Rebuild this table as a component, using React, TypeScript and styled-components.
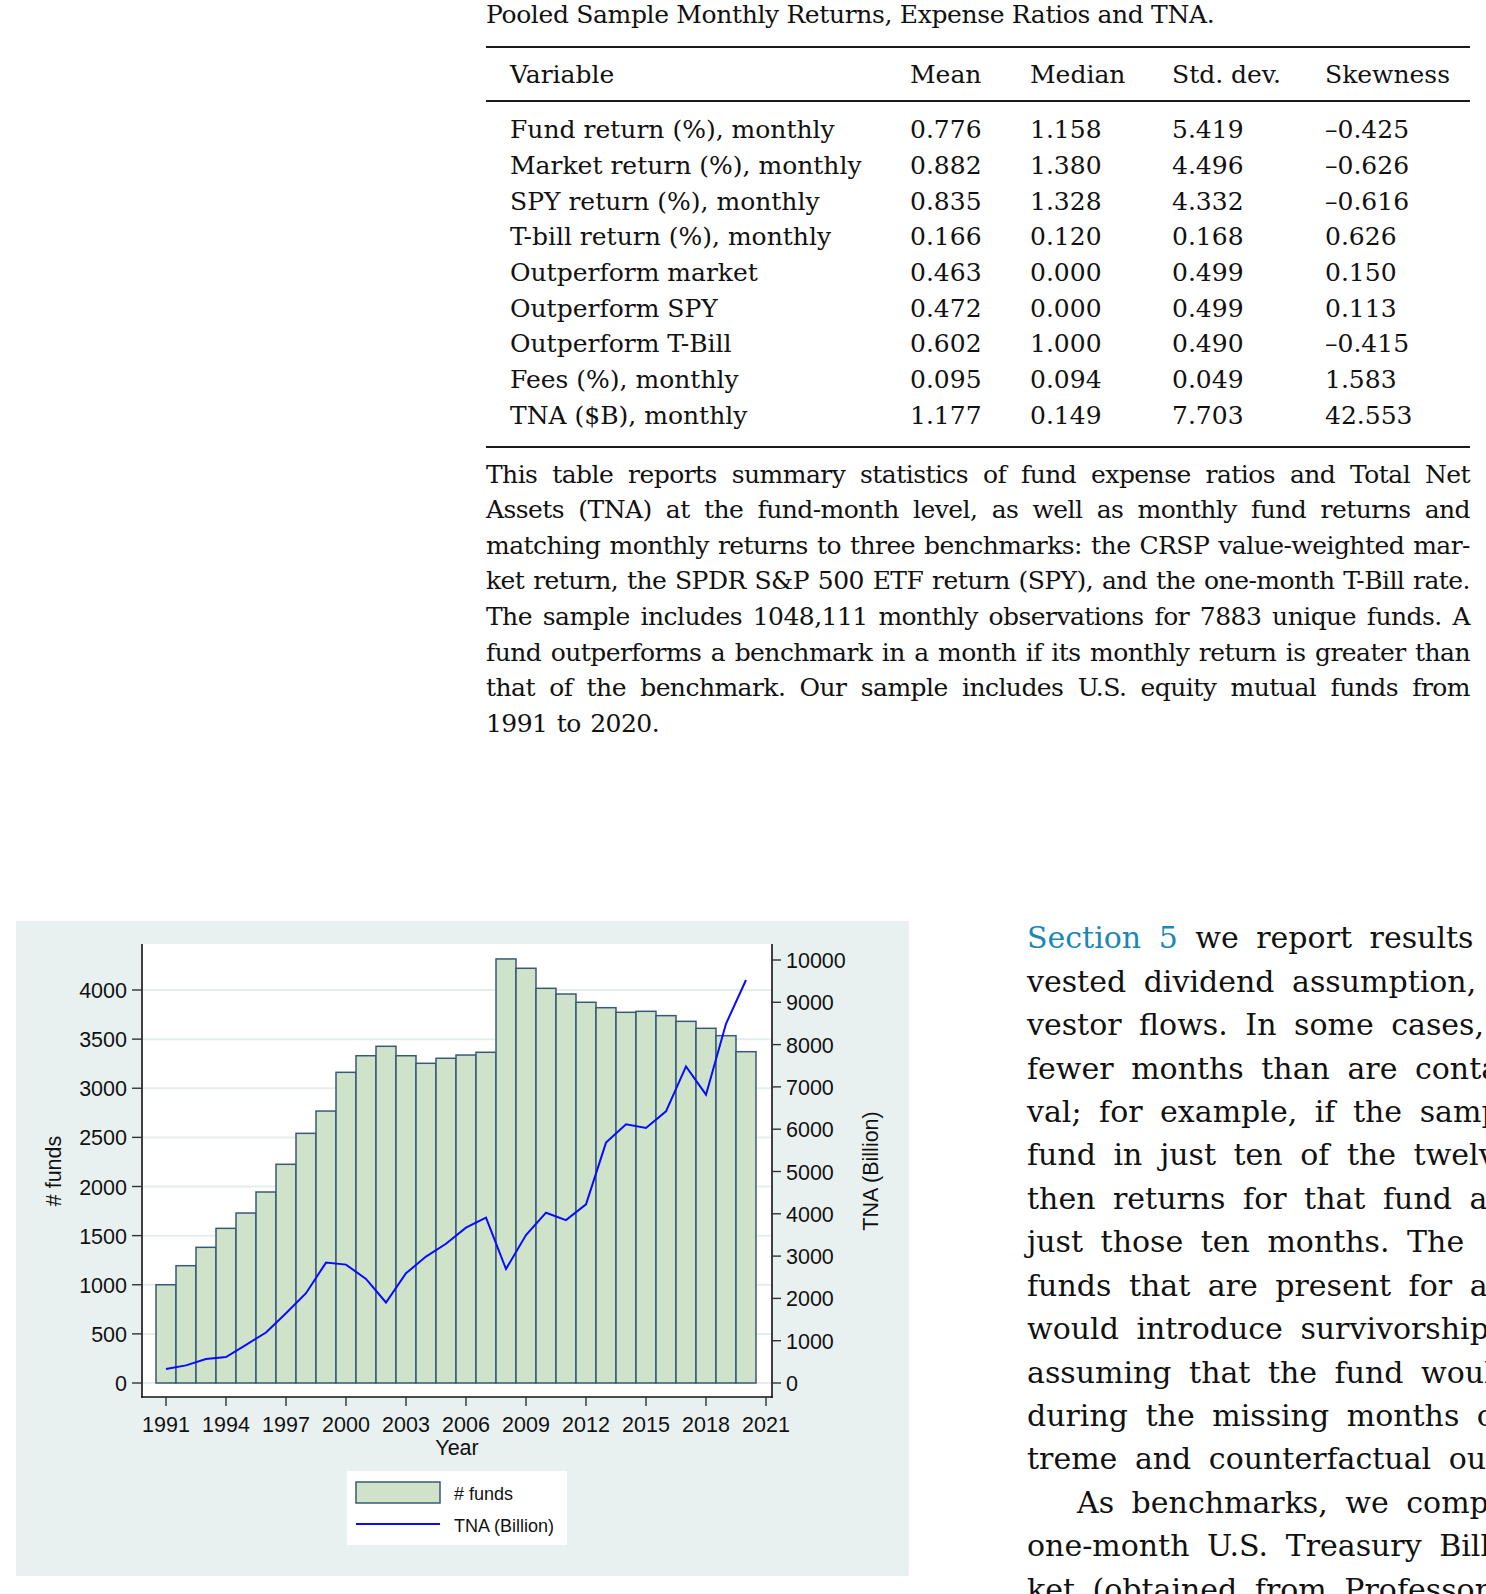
import React from 'react'
import styled, { createGlobalStyle } from 'styled-components'

const GlobalStyle = createGlobalStyle`
  html, body {
    margin: 0;
    padding: 0;
    background: #fff;
    overflow: hidden;
  }
`

const rows = [
  ['Fund return (%), monthly', '0.776', '1.158', '5.419', '–0.425'],
  ['Market return (%), monthly', '0.882', '1.380', '4.496', '–0.626'],
  ['SPY return (%), monthly', '0.835', '1.328', '4.332', '–0.616'],
  ['T-bill return (%), monthly', '0.166', '0.120', '0.168', '0.626'],
  ['Outperform market', '0.463', '0.000', '0.499', '0.150'],
  ['Outperform SPY', '0.472', '0.000', '0.499', '0.113'],
  ['Outperform T-Bill', '0.602', '1.000', '0.490', '–0.415'],
  ['Fees (%), monthly', '0.095', '0.094', '0.049', '1.583'],
  ['TNA ($B), monthly', '1.177', '0.149', '7.703', '42.553'],
]

const captionLines = [
  'This table reports summary statistics of fund expense ratios and Total Net',
  'Assets (TNA) at the fund-month level, as well as monthly fund returns and',
  'matching monthly returns to three benchmarks: the CRSP value-weighted mar-',
  'ket return, the SPDR S&P 500 ETF return (SPY), and the one-month T-Bill rate.',
  'The sample includes 1048,111 monthly observations for 7883 unique funds. A',
  'fund outperforms a benchmark in a month if its monthly return is greater than',
  'that of the benchmark. Our sample includes U.S. equity mutual funds from',
  '1991 to 2020.',
]

// lines of the running text on the right, cut by the page edge
const bodyLines = [
  'vested dividend assumption, and results that account for in-',
  'vestor flows. In some cases, a fund appears in the data in',
  'fewer months than are contained in the measurement inter-',
  'val; for example, if the sample period includes data for a',
  'fund in just ten of the twelve months of a calendar year,',
  'then returns for that fund and year are compounded over',
  'just those ten months. The  alternative of only including',
  'funds that are present for all months of the interval',
  'would introduce survivorship bias, while the alternative of',
  'assuming that the fund would have earned a zero return',
  'during the missing months could lead to potentially ex-',
  'treme and counterfactual outcomes.',
]

const funds = [
  1000, 1194, 1381, 1574, 1730, 1944, 2226, 2541, 2768, 3162, 3331, 3427, 3331, 3254, 3305,
  3338, 3366, 4316, 4221, 4017, 3959, 3875, 3820, 3773, 3783, 3739, 3681, 3610, 3535, 3372,
]
const tna = [
  330, 417, 566, 613, 903, 1195, 1650, 2123, 2846, 2799, 2460, 1903, 2594, 2988, 3290,
  3672, 3908, 2696, 3500, 4026, 3851, 4222, 5684, 6115, 6030, 6422, 7484, 6816, 8491, 9528,
]

const BASE = 462
const yFund = (v: number) => BASE - v * 0.09825
const yTna = (v: number) => BASE - v * 0.0423
const xYear = (yr: number) => 150 + (yr - 1991) * 20

const App: React.FC = () => {
  const fundTicks = [0, 500, 1000, 1500, 2000, 2500, 3000, 3500, 4000]
  const tnaTicks = [0, 1000, 2000, 3000, 4000, 5000, 6000, 7000, 8000, 9000, 10000]
  const yearTicks = [1991, 1994, 1997, 2000, 2003, 2006, 2009, 2012, 2015, 2018, 2021]
  const linePts = tna.map((v, i) => `${xYear(1991 + i)},${yTna(v).toFixed(1)}`).join(' ')

  return (
    <Page>
      <GlobalStyle />
      <TableBlock>
        <TableTitle>Pooled Sample Monthly Returns, Expense Ratios and TNA.</TableTitle>
        <HeaderRow>
          <span>Variable</span>
          <span>Mean</span>
          <span>Median</span>
          <span>Std. dev.</span>
          <span>Skewness</span>
        </HeaderRow>
        <TableBody>
          {rows.map((r) => (
            <DataRow key={r[0]}>
              {r.map((c, i) => (
                <span key={i}>{c}</span>
              ))}
            </DataRow>
          ))}
        </TableBody>
        <Caption>
          {captionLines.map((l, i) => (
            <CaptionLine key={i} $last={i === captionLines.length - 1}>
              {l}
            </CaptionLine>
          ))}
        </Caption>
      </TableBlock>

      <BottomRow>
        <ChartPanel>
          <svg width={893} height={655} viewBox="0 0 893 655">
            <rect x={126} y={23} width={630} height={453} fill="#fff" />
            {fundTicks.map((t) => (
              <line key={t} x1={127} x2={756} y1={yFund(t)} y2={yFund(t)} stroke="#e6eeed" strokeWidth={2} />
            ))}
            {funds.map((v, i) => (
              <rect
                key={i}
                x={xYear(1991 + i) - 10}
                y={yFund(v)}
                width={20}
                height={BASE - yFund(v)}
                fill="#cfe3cb"
                stroke="#3a5975"
                strokeWidth={1.5}
              />
            ))}
            <polyline points={linePts} fill="none" stroke="#0a0aff" strokeWidth={2} strokeLinejoin="miter" />

            <line x1={126} x2={126} y1={23} y2={476.7} stroke="#111" strokeWidth={1.6} />
            <line x1={756} x2={756} y1={23} y2={476.7} stroke="#111" strokeWidth={1.6} />
            <line x1={125.2} x2={756.8} y1={476} y2={476} stroke="#111" strokeWidth={1.6} />

            {fundTicks.map((t) => (
              <g key={t}>
                <line x1={116} x2={126} y1={yFund(t)} y2={yFund(t)} stroke="#333" strokeWidth={1.4} />
                <TickText x={111} y={yFund(t) + 8} textAnchor="end">
                  {t}
                </TickText>
              </g>
            ))}
            {tnaTicks.map((t) => (
              <g key={t}>
                <line x1={756} x2={765} y1={yTna(t)} y2={yTna(t)} stroke="#333" strokeWidth={1.4} />
                <TickText x={770} y={yTna(t) + 8} textAnchor="start">
                  {t}
                </TickText>
              </g>
            ))}
            {yearTicks.map((yr) => (
              <g key={yr}>
                <line x1={xYear(yr)} x2={xYear(yr)} y1={476} y2={485} stroke="#333" strokeWidth={1.4} />
                <TickText x={xYear(yr)} y={511} textAnchor="middle">
                  {yr}
                </TickText>
              </g>
            ))}
            <TickText x={441} y={534} textAnchor="middle">
              Year
            </TickText>
            <TickText transform="translate(45,250) rotate(-90)" textAnchor="middle">
              # funds
            </TickText>
            <TickText transform="translate(862,250) rotate(-90)" textAnchor="middle">
              TNA (Billion)
            </TickText>

            <rect x={331} y={550} width={220} height={74} fill="#fff" />
            <rect x={340} y={561} width={84} height={21} fill="#cfe3cb" stroke="#3a5975" strokeWidth={1.5} />
            <line x1={340} x2={424} y1={603} y2={603} stroke="#0a0aff" strokeWidth={2} />
            <LegendText x={438} y={578.5}>
              # funds
            </LegendText>
            <LegendText x={438} y={610.5}>
              TNA (Billion)
            </LegendText>
          </svg>
        </ChartPanel>

        <BodyColumn>
          <BodyLine>
            <SectionRef>Section 5</SectionRef> we report results that instead rely on the rein-
          </BodyLine>
          {bodyLines.map((l, i) => (
            <BodyLine key={i}>{l}</BodyLine>
          ))}
          <BodyLine $indent>As benchmarks, we compare the fund returns to those of</BodyLine>
          <BodyLine>one-month U.S. Treasury Bills, to the CRSP value-weighted mar-</BodyLine>
          <BodyLine>ket (obtained from Professor Kenneth French&apos;s website),</BodyLine>
        </BodyColumn>
      </BottomRow>
    </Page>
  )
}

export default App

const Page = styled.div`
  width: 1486px;
  height: 1594px;
  overflow: hidden;
  font-family: 'DejaVu Serif', 'Liberation Serif', serif;
  color: #111;
`

const TableBlock = styled.div`
  margin-left: 486px;
  width: 984px;
  font-size: 25px;
`

const TableTitle = styled.div`
  line-height: 30px;
  height: 30px;
  margin-bottom: 16px;
  white-space: nowrap;
  letter-spacing: -0.35px;
`

const rowGrid = `
  display: grid;
  grid-template-columns: 400px 120px 142px 153px 1fr;
  padding-left: 24px;
  align-items: center;
  white-space: nowrap;
`

const HeaderRow = styled.div`
  ${rowGrid}
  height: 52px;
  border-top: 2px solid #1a1a1a;
  border-bottom: 2px solid #1a1a1a;
`

const TableBody = styled.div`
  padding: 10px 0 12.5px;
  border-bottom: 2px solid #1a1a1a;
`

const DataRow = styled.div`
  ${rowGrid}
  height: 35.7px;
`

const Caption = styled.div`
  margin-top: 9px;
  line-height: 35.6px;
  letter-spacing: -0.55px;
  word-spacing: -2px;
`

const CaptionLine = styled.div<{ $last?: boolean }>`
  height: 35.6px;
  text-align: justify;
  text-align-last: ${(p) => (p.$last ? 'left' : 'justify')};
  word-spacing: ${(p) => (p.$last ? '2px' : 'inherit')};
`

const BottomRow = styled.div`
  display: flex;
  align-items: flex-start;
  margin-top: 172px;
`

const ChartPanel = styled.div`
  flex-shrink: 0;
  margin: 8px 0 0 16px;
  width: 893px;
  height: 655px;
  background: #e9f1f0;

  svg {
    display: block;
  }
`

const TickText = styled.text`
  font-family: 'Liberation Sans', Arial, sans-serif;
  font-size: 21.5px;
  fill: #111;
`

const LegendText = styled.text`
  font-family: 'Liberation Sans', Arial, sans-serif;
  font-size: 18px;
  fill: #111;
`

const BodyColumn = styled.div`
  flex-shrink: 0;
  margin: 3px 0 0 118px;
  width: 984px;
  font-size: 30px;
  line-height: 43.4px;
`

const BodyLine = styled.div<{ $indent?: boolean }>`
  white-space: pre;
  word-spacing: 8px;
  padding-left: ${(p) => (p.$indent ? '50px' : '0')};
`

const SectionRef = styled.span`
  color: #1a87b5;
`
